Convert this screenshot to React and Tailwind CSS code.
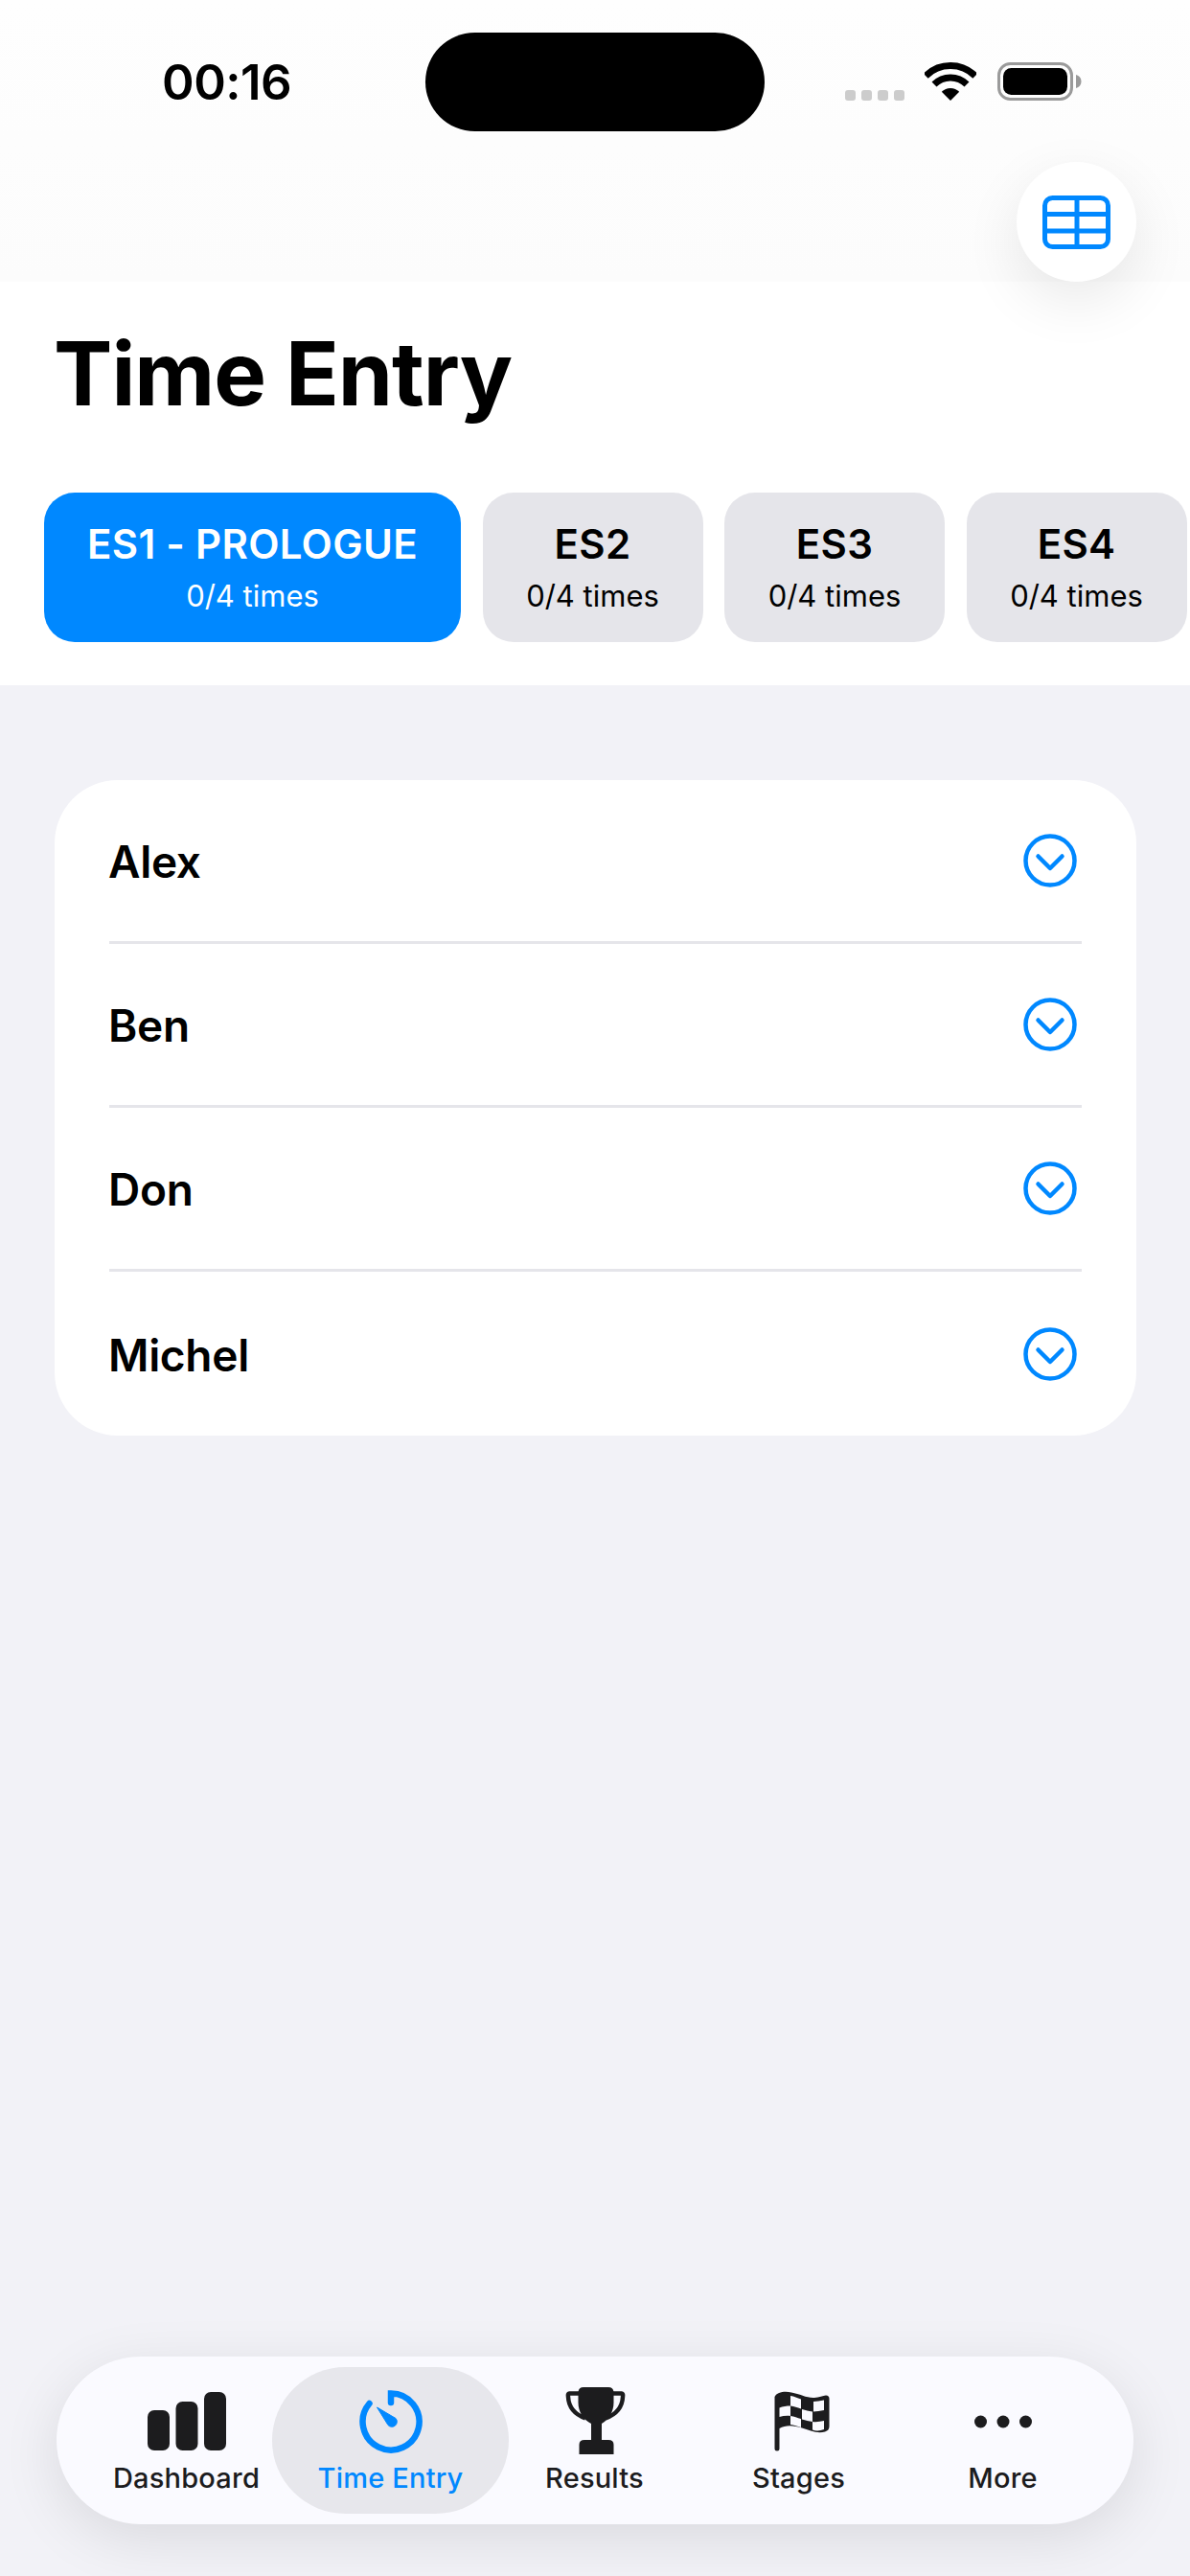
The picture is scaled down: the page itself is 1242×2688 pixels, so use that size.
import React from "react";

const stageTabs = [
  { name: "ES1 - PROLOGUE", active: true },
  { name: "ES2" },
  { name: "ES3" },
  { name: "ES4" },
];

const drivers = ["Alex", "Ben", "Don", "Michel"];

function BatteryIcon() {
  return (
    <svg width="88" height="40" viewBox="0 0 88 40">
      <rect x="1.5" y="1.5" width="76" height="37" rx="12" fill="none" stroke="#9a9a9a" strokeWidth="3" />
      <rect x="6" y="6" width="67" height="28" rx="8.5" fill="#000" />
      <path d="M82 13 C85.5 14 87.5 16.5 87.5 20 C87.5 23.5 85.5 26 82 27 Z" fill="#9a9a9a" />
    </svg>
  );
}

function WifiIcon() {
  return (
    <svg width="54" height="40" viewBox="0 0 54 40" fill="none" stroke="#000" strokeWidth="7">
      <path d="M1.2 14.2 A36.5 36.5 0 0 1 52.8 14.2" />
      <path d="M10 23 A24 24 0 0 1 44 23" />
      <path d="M27 40 L17.8 30.8 A13 13 0 0 1 36.2 30.8 Z" fill="#000" stroke="none" />
    </svg>
  );
}

function TableIcon() {
  return (
    <svg width="71" height="56" viewBox="0 0 71 56" fill="none" stroke="#0088ff" strokeWidth="5">
      <rect x="2.5" y="2.5" width="66" height="51" rx="8" />
      <path d="M2.5 19.5 H68.5 M2.5 37 H68.5 M36 2.5 V53.5" />
    </svg>
  );
}

function ChevronCircle() {
  return (
    <svg width="56" height="56" viewBox="0 0 56 56" fill="none" stroke="#0088ff" strokeWidth="4.5" strokeLinecap="round" strokeLinejoin="round">
      <circle cx="28" cy="28" r="25.5" />
      <path d="M15.5 23.5 L28 36 L40.5 23.5" />
    </svg>
  );
}

function BarsIcon() {
  return (
    <svg width="82" height="80" viewBox="0 0 82 80" fill="#1c1c1e">
      <rect x="0" y="28" width="23" height="42" rx="7" />
      <rect x="29.5" y="19" width="23" height="51" rx="7" />
      <rect x="59" y="9" width="23" height="61" rx="7" />
    </svg>
  );
}

function TimerIcon() {
  return (
    <svg width="80" height="80" viewBox="0 0 80 80">
      <path
        d="M40 20 V10.5 A29.5 29.5 0 1 1 17.5 21"
        fill="none"
        stroke="#0088ff"
        strokeWidth="6.5"
        strokeLinecap="round"
      />
      <path d="M25.5 25 L45 36.5 A5.2 5.2 0 1 1 37 43.5 Z" fill="#0088ff" stroke="#0088ff" strokeWidth="1" strokeLinejoin="round" />
    </svg>
  );
}

function TrophyIcon() {
  return (
    <svg width="80" height="80" viewBox="0 2 80 80" fill="#1c1c1e">
      <path
        d="M24 12.5 H13 Q11.5 12.5 12 16 C12.5 27 18 34 30 38.5 M57 12.5 H68 Q69.5 12.5 69 16 C68.5 27 63 34 51 38.5"
        fill="none"
        stroke="#1c1c1e"
        strokeWidth="4.5"
      />
      <path d="M28 6 H54 Q59 6 59.5 11 V22 C59.5 32 54 40 47 44 V61 H54 Q59.5 61 59.5 66 V76 H23.5 V66 Q23.5 61 29 61 H36 V44 C28 40 22.5 32 22.5 22 V11 Q23 6 28 6 Z" />
    </svg>
  );
}

function FlagIcon() {
  return (
    <svg width="80" height="80" viewBox="-1 2 80 80">
      <path
        d="M13.5 16 C16 11 24 10 31 11.5 C40 13 47 17.5 55 17 C60 16.8 64 15 67 14.5 Q70.5 14.5 70.5 18 V47 Q70.5 51 66 52.5 C58 55 50 51 42 48.5 C33 45.5 25 45 18.5 49 V70 A2.5 2.5 0 0 1 13.5 70 Z"
        fill="#1c1c1e"
      />
      <g fill="#fafaff">
        <path d="M30 15 C34 15.5 37 17 41 18.5 V28.5 C37 27 34 26 30 25.5 Z" />
        <path d="M54 21 C57 21 61 20 65 19.5 V30 C61 30.5 57 31.5 54 31.5 Z" />
        <path d="M18.5 27.5 C22 26 26 25.5 30 25.5 V36 C26 35.5 22 36 18.5 37 Z" />
        <path d="M42 29 C46 30 49 31 53 31.5 V42 C49 41.5 46 40.5 42 39.5 Z" />
        <path d="M30 36 C34 36.5 37 38 41 39 V48 C37 46.5 34 45.5 30 45 Z" />
        <path d="M53 42 C57 42.5 61 42 65 41 V50 C61 51.5 57 52 53 50.5 Z" />
      </g>
    </svg>
  );
}

function DotsIcon() {
  return (
    <svg width="60" height="80" viewBox="0 0 60 80" fill="#1c1c1e">
      <circle cx="6.5" cy="40" r="6.5" />
      <circle cx="30" cy="40" r="6.5" />
      <circle cx="53.5" cy="40" r="6.5" />
    </svg>
  );
}

function NavItem({ icon, label, active }) {
  return (
    <div
      className={
        active
          ? "w-[247px] -mx-[17px] h-[153px] shrink-0 rounded-full bg-[#e7e7ec] flex flex-col items-center pt-[17px]"
          : "w-[213px] h-[153px] shrink-0 flex flex-col items-center pt-[17px]"
      }
    >
      <div className="h-[80px] flex items-center justify-center">{icon}</div>
      <span
        className={
          active
            ? "mt-[4px] text-[29px] leading-none font-[450] tracking-[0.2px] text-[#0088ff]"
            : "mt-[4px] text-[29px] leading-none font-[450] tracking-[0.2px] text-[#1c1c1e]"
        }
      >
        {label}
      </span>
    </div>
  );
}

export default function App() {
  return (
    <div className="relative w-[1242px] h-[2688px] overflow-hidden bg-[#f2f2f7] font-[Inter,sans-serif] text-black">
      <header className="bg-white">
        <div className="h-[294px] bg-gradient-to-b from-[#fefefe] to-[#fcfcfc]">
          <div className="flex items-start pt-[34px]">
            <div className="w-[444px] pl-[169px] pt-[26px] text-[51px] leading-none font-semibold tracking-[-0.5px]">00:16</div>
            <div className="w-[354px] h-[103px] rounded-full bg-black" />
            <div className="h-[71px] pl-[84px] flex items-end">
              <div className="flex gap-[6px]">
                <span className="w-[11px] h-[11px] rounded-[3px] bg-[#cccccc]" />
                <span className="w-[11px] h-[11px] rounded-[3px] bg-[#cccccc]" />
                <span className="w-[11px] h-[11px] rounded-[3px] bg-[#cccccc]" />
                <span className="w-[11px] h-[11px] rounded-[3px] bg-[#cccccc]" />
              </div>
              <div className="ml-[21px]"><WifiIcon /></div>
              <div className="ml-[22px]"><BatteryIcon /></div>
            </div>
          </div>
        </div>

        <h1 className="pt-[50px] pl-[56px] text-[92px] leading-none font-bold tracking-[-1px]">Time Entry</h1>

        <div className="mt-[78px] pb-[45px] pl-[46px] flex gap-[22.5px]">
          {stageTabs.map((tab) => (
            <div
              key={tab.name}
              className={
                tab.active
                  ? "w-[435px] h-[156px] shrink-0 rounded-[32px] bg-[#0088ff] text-white flex flex-col items-center justify-center"
                  : "w-[230px] h-[156px] shrink-0 rounded-[32px] bg-[#e5e5ea] text-black flex flex-col items-center justify-center"
              }
            >
              <span className="text-[42px] leading-none font-semibold tracking-[0.3px]">{tab.name}</span>
              <span className="mt-[17px] text-[31px] leading-none">0/4 times</span>
            </div>
          ))}
        </div>
      </header>

      <main className="mt-[99px] ml-[57px] mr-[56px] rounded-[66px] bg-white px-[57px]">
        {drivers.map((name, i) => (
          <div
            key={name}
            className={
              i < drivers.length - 1
                ? "h-[171px] flex items-center justify-between border-b-[3px] border-[#e5e5ea]"
                : "h-[171px] flex items-center justify-between"
            }
          >
            <span className="-ml-[1px] pt-[2px] text-[46px] leading-none font-semibold tracking-[-0.3px]">{name}</span>
            <span className="mr-[5px]"><ChevronCircle /></span>
          </div>
        ))}
      </main>

      <nav className="absolute left-[59px] top-[2459px] w-[1124px] h-[175px] rounded-full bg-[#fafaff] shadow-[0_15px_60px_rgba(0,0,0,0.10)] pl-[29px] flex items-center">
        <NavItem icon={<BarsIcon />} label="Dashboard" />
        <NavItem icon={<TimerIcon />} label="Time Entry" active />
        <NavItem icon={<TrophyIcon />} label="Results" />
        <NavItem icon={<FlagIcon />} label="Stages" />
        <NavItem icon={<DotsIcon />} label="More" />
      </nav>

      <button className="absolute left-[1061px] top-[169px] w-[125px] h-[125px] rounded-full bg-white shadow-[0_20px_60px_rgba(0,0,0,0.09)] flex items-center justify-center">
        <TableIcon />
      </button>
    </div>
  );
}
